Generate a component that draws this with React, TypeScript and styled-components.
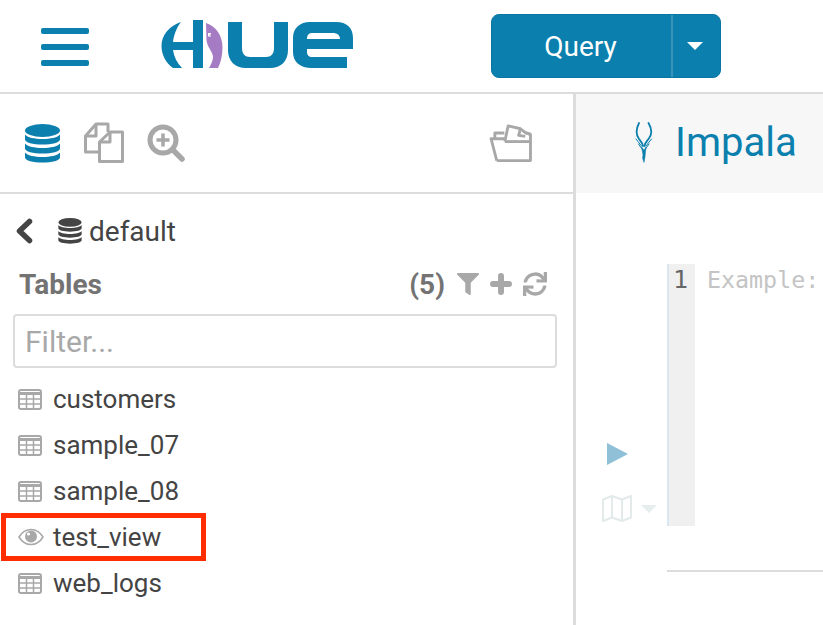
import React, { FC } from 'react';
import styled, { createGlobalStyle } from 'styled-components';
import { FaFilter, FaSync } from 'react-icons/fa';

const blue = '#0b7fad';
const grey = '#a8a8a8';

const tables = [
  { name: 'customers', view: false },
  { name: 'sample_07', view: false },
  { name: 'sample_08', view: false },
  { name: 'test_view', view: true },
  { name: 'web_logs', view: false },
];

const HueLogo: FC = () => (
  <LogoSvg viewBox="161 20 193 48" width={193} height={48}>
    <path
      fill={blue}
      d="M181 22C169 26 161.500 35 161.500 46C161.500 55 166 63 173 68L182 68C177 63 174 57 173 50L193 50L193 68L203 68L203 20L193 20L193 42L173 42C174 34 177 27 181 22Z"
    />
    <path
      fill="#a57cc4"
      d="M206 23C216 26 222.500 36 222.500 47C222.500 55 221 62 218 68L209 68C211 64 213 61 213 57C213 52 207 47 206.500 40Z"
    />
    <path fill="#fff" d="M208 33h3v1.500h-1.500v1h1.500v1h-3z" />
    <path
      fill={blue}
      d="M228 22L242 22L242 48C242 54 245 57 250 57L266 57C271 57 274 54 274 48L274 22L288 22L288 50C288 61 281 68 270 68L246 68C235 68 228 61 228 50Z"
    />
    <path
      fill={blue}
      fillRule="evenodd"
      d="M293 38C293 28 300 22 310 22L336 22C347 22 353 28 353 38L353 49L307 49L307 52C307 55 309 57 312 57L347 57L347 68L312 68C300 68 293 62 293 52ZM307 39L340 39C340 35 337 33 333 33L312 33C309 33 307 35 307 39Z"
    />
  </LogoSvg>
);

const DbIcon: FC<{ width: number; height: number; color: string }> = ({ width, height, color }) => (
  <svg viewBox="0 0 35 39" width={width} height={height} fill={color}>
    <ellipse cx="17.500" cy="6.500" rx="17.500" ry="6.500" />
    {[10.5, 19.5, 28.5].map((y) => (
      <path
        key={y}
        transform={`translate(0 ${y})`}
        d="M0 0C4 6 31 6 35 0V5C35 8 27 10 17.500 10C8 10 0 8 0 5Z"
      />
    ))}
  </svg>
);

const DocsIcon: FC = () => (
  <svg viewBox="0 0 40 42" width={40} height={42} fill="none" stroke={grey} strokeWidth={3} strokeLinejoin="round">
    <path d="M15 30H1.500V14L12 2H24V10" />
    <path d="M12 2V14H1.500" />
    <path d="M15.500 20L26 10H38.500V39.500H15.500Z" fill="#fff" />
    <path d="M26 10V20H15.500" />
  </svg>
);

const SearchPlusIcon: FC = () => (
  <svg viewBox="0 0 38 38" width={38} height={38} fill="none" stroke={grey}>
    <circle cx="16" cy="16" r="13" strokeWidth={5} />
    <path d="M16 9.500V22.500M9.500 16H22.500" strokeWidth={3.500} />
    <path d="M26 26L35 35" strokeWidth={5.500} strokeLinecap="round" />
  </svg>
);

const FolderIcon: FC = () => (
  <svg viewBox="0 0 46 40" width={44} height={38} fill="none" stroke={grey} strokeWidth={3} strokeLinejoin="round">
    <path d="M8 38.500H43.500V11L38 9" />
    <path d="M8 38.500L2 15.500H16" />
    <path d="M6 15V9.500H16" />
    <path d="M16.500 18.500L20 2L33 5L38 9L43.500 11" />
    <path d="M16.500 18.500H43.500" />
    <path d="M33 5L31 12L38 13" />
  </svg>
);

const ImpalaIcon: FC = () => (
  <svg viewBox="0 0 18 41" width={18} height={41} fill="none" stroke={blue} strokeWidth={1.500} strokeLinecap="round">
    <path d="M4 1C1 7 1 13 4 17C6 19.500 7.500 21 8 24" strokeWidth={1.800} />
    <path d="M13.500 1C17 7 17 13 13.500 17C11.500 19.500 10 21 9.500 24" strokeWidth={1.800} />
    <path d="M1 17L6.500 24M3.500 22L7 27M16.500 17L11 24M14 22L10.500 27" strokeWidth={1} />
    <path d="M6.500 25L8 33L7.500 36L9 40.500L10 35L11 25L9 28Z" fill={blue} strokeWidth={0.500} />
  </svg>
);

const MapIcon: FC = () => (
  <svg viewBox="0 0 30 27" width={30} height={27} fill="none" stroke="#e3eaea" strokeWidth={2} strokeLinejoin="round">
    <path d="M1 4.500L10 1L20 4.500L29 1V22.500L20 26L10 22.500L1 26Z" />
    <path d="M10 1V22.500M20 4.500V26" />
  </svg>
);

const TableIcon: FC = () => (
  <svg viewBox="0 0 24 21" width={24} height={21} fill="none" stroke={grey}>
    <rect x="1" y="1" width="22" height="19" rx="2" strokeWidth={2} />
    <path d="M1 4.500H23" strokeWidth={3} />
    <path d="M1 10H23M1 15H23M8.500 4V20M15.500 4V20" strokeWidth={1.500} />
  </svg>
);

const EyeIcon: FC = () => (
  <svg viewBox="0 0 26 18" width={26} height={18} fill="none" stroke={grey} strokeWidth={1.500}>
    <path d="M1 9C4 4 8 1.500 13 1.500C18 1.500 22 4 25 9C22 14 18 16.500 13 16.500C8 16.500 4 14 1 9Z" />
    <circle cx="13" cy="8.500" r="6" fill={grey} stroke="none" />
    <circle cx="10.500" cy="6" r="1.500" fill="#fff" stroke="none" />
  </svg>
);

const ChevronIcon: FC = () => (
  <svg viewBox="0 0 17 26" width={17} height={26} fill="none" stroke="#444" strokeWidth={5.500} strokeLinecap="round" strokeLinejoin="round">
    <path d="M13.500 3.500L3.500 13L13.500 22.500" />
  </svg>
);

const PlusIcon: FC = () => (
  <svg viewBox="0 0 22 22" width={22} height={22} fill="none" stroke={grey} strokeWidth={6} strokeLinecap="round">
    <path d="M11 3V19M3 11H19" />
  </svg>
);

export default function App() {
  return (
    <Page>
      <GlobalStyle />
      <TopBar>
        <Burger>
          <BurgerLine />
          <BurgerLine />
          <BurgerLine />
        </Burger>
        <HueLogo />
        <QueryButton>
          <QueryLabel>Query</QueryLabel>
          <QueryCaret>
            <Caret />
          </QueryCaret>
        </QueryButton>
      </TopBar>
      <Main>
        <Sidebar>
          <SideTools>
            <ToolGroup>
              <DbIcon width={35} height={39} color={blue} />
              <DocsIcon />
              <SearchPlusIcon />
            </ToolGroup>
            <FolderIcon />
          </SideTools>
          <Assist>
            <Crumb>
              <ChevronIcon />
              <DbIcon width={24} height={26} color="#444" />
              <CrumbLabel>default</CrumbLabel>
            </Crumb>
            <SectionHead>
              <SectionTitle>Tables</SectionTitle>
              <SectionCount>(5)</SectionCount>
              <SectionActions>
                <FaFilter size={22} color={grey} />
                <PlusIcon />
                <FaSync size={24} color={grey} />
              </SectionActions>
            </SectionHead>
            <FilterInput placeholder="Filter..." readOnly />
            <TableList>
              {tables.map((table) => (
                <TableRow key={table.name}>
                  <RowIcon>{table.view ? <EyeIcon /> : <TableIcon />}</RowIcon>
                  {table.name}
                  {table.view && <Highlight />}
                </TableRow>
              ))}
            </TableList>
          </Assist>
        </Sidebar>
        <Editor>
          <TabBar>
            <ImpalaIcon />
            <TabTitle>Impala</TabTitle>
          </TabBar>
          <Snippet>
            <Controls>
              <PlayTriangle />
              <MapRow>
                <MapIcon />
                <MapCaret />
              </MapRow>
            </Controls>
            <Code>
              <CodeBody>
                <Gutter>1</Gutter>
                <Placeholder>Example:</Placeholder>
              </CodeBody>
              <CodeRule />
            </Code>
          </Snippet>
        </Editor>
      </Main>
    </Page>
  );
}

const GlobalStyle = createGlobalStyle`
  html, body {
    margin: 0;
    padding: 0;
    background: #fff;
    overflow: hidden;
  }

  * {
    box-sizing: border-box;
  }
`;

const Page = styled.div`
  width: 823px;
  height: 625px;
  overflow: hidden;
  display: flex;
  flex-direction: column;
  font-family: Roboto, 'Liberation Sans', sans-serif;
`;

const TopBar = styled.div`
  height: 94px;
  flex-shrink: 0;
  display: flex;
  align-items: flex-start;
  padding: 14px 0 0 41px;
  border-bottom: 2px solid #dcdcdc;
`;

const Burger = styled.div`
  width: 48px;
  margin-top: 14px;
  margin-right: 72px;
  display: flex;
  flex-direction: column;
  gap: 10px;
`;

const BurgerLine = styled.div`
  height: 6px;
  border-radius: 2px;
  background: ${blue};
`;

const LogoSvg = styled.svg`
  margin-top: 6px;
  flex-shrink: 0;
`;

const QueryButton = styled.div`
  width: 230px;
  height: 64px;
  margin-left: 137px;
  display: flex;
  border-radius: 8px;
  background: ${blue};
  border: 1px solid #0a76a1;
  color: #fff;
`;

const QueryLabel = styled.div`
  width: 181px;
  display: flex;
  align-items: center;
  justify-content: center;
  font-size: 28px;
  padding-right: 2px;
  border-right: 2px solid #3a93b9;
`;

const QueryCaret = styled.div`
  flex: 1;
  display: flex;
  align-items: center;
  justify-content: center;
`;

const Caret = styled.div`
  width: 0;
  height: 0;
  border-left: 8px solid transparent;
  border-right: 8px solid transparent;
  border-top: 8px solid #fff;
  margin-left: -3px;
`;

const Main = styled.div`
  flex: 1;
  min-height: 0;
  display: flex;
`;

const Sidebar = styled.div`
  width: 576px;
  flex-shrink: 0;
  border-right: 3px solid #dcdcdc;
`;

const SideTools = styled.div`
  height: 100px;
  display: flex;
  align-items: center;
  justify-content: space-between;
  padding: 0 40px 0 25px;
  border-bottom: 2px solid #dcdcdc;
`;

const ToolGroup = styled.div`
  display: flex;
  align-items: center;
  gap: 23.500px;
`;

const Assist = styled.div`
  padding: 0 16px 0 13px;
`;

const Crumb = styled.div`
  height: 38px;
  margin-top: 18px;
  padding-left: 3px;
  display: flex;
  align-items: center;
  gap: 25px;
  color: #444;
`;

const CrumbLabel = styled.span`
  font-size: 28px;
  margin-left: -18px;
`;

const SectionHead = styled.div`
  height: 38px;
  margin-top: 15px;
  padding: 0 10px 0 6px;
  display: flex;
  align-items: center;
  font-size: 28px;
  font-weight: 700;
  color: #737373;
`;

const SectionTitle = styled.span`
  flex: 1;
`;

const SectionCount = styled.span`
  margin-right: 12px;
`;

const SectionActions = styled.div`
  display: flex;
  align-items: center;
  gap: 11px;
`;

const FilterInput = styled.input`
  display: block;
  width: 544px;
  height: 54px;
  margin-top: 11px;
  padding: 0 10px;
  border: 2px solid #dcdcdc;
  border-radius: 4px;
  outline: none;
  font-family: inherit;
  font-size: 30px;

  &::placeholder {
    color: #a8a8a8;
    opacity: 1;
  }
`;

const TableList = styled.div`
  margin-top: 8px;
`;

const TableRow = styled.div`
  position: relative;
  height: 46px;
  display: flex;
  align-items: center;
  font-size: 26px;
  color: #444;
`;

const RowIcon = styled.span`
  width: 40px;
  padding-left: 5px;
  display: flex;
  align-items: center;
`;

const Highlight = styled.div`
  position: absolute;
  left: -12px;
  top: -1px;
  width: 205px;
  height: 48px;
  border: 5px solid #ff2d00;
`;

const Editor = styled.div`
  flex: 1;
  min-width: 0;
`;

const TabBar = styled.div`
  height: 99px;
  display: flex;
  align-items: center;
  gap: 22px;
  padding: 0 0 2px 59px;
  background: #f7f7f7;
`;

const TabTitle = styled.span`
  font-size: 40px;
  color: ${blue};
`;

const Snippet = styled.div`
  display: flex;
  padding-top: 71px;
`;

const Controls = styled.div`
  width: 91px;
  height: 262px;
  flex-shrink: 0;
  display: flex;
  flex-direction: column;
  justify-content: flex-end;
  padding: 0 0 4px 26px;
`;

const PlayTriangle = styled.div`
  width: 0;
  height: 0;
  margin: 0 0 30px 5px;
  border-top: 11px solid transparent;
  border-bottom: 11px solid transparent;
  border-left: 21px solid #8fc0d8;
`;

const MapRow = styled.div`
  display: flex;
  align-items: center;
  gap: 9px;
`;

const MapCaret = styled.div`
  width: 0;
  height: 0;
  border-left: 8px solid transparent;
  border-right: 8px solid transparent;
  border-top: 8px solid #e6eded;
`;

const Code = styled.div`
  flex: 1;
  min-width: 0;
`;

const CodeBody = styled.div`
  height: 262px;
  display: flex;
  font-family: 'DejaVu Sans Mono', monospace;
  font-size: 23.300px;
  line-height: 32px;
`;

const Gutter = styled.div`
  width: 28px;
  flex-shrink: 0;
  padding-left: 4px;
  background: #f0f0f0;
  border-left: 2px solid #dbe7f0;
  color: #666;
  font-size: 25px;
`;

const Placeholder = styled.div`
  margin-left: 12px;
  color: #c4c4c4;
  white-space: nowrap;
`;

const CodeRule = styled.div`
  height: 2px;
  margin-top: 44px;
  background: #dcdcdc;
`;
